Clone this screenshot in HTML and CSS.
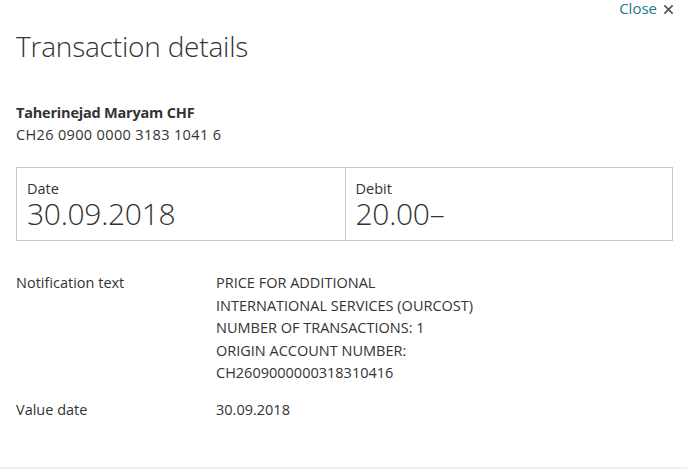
FILE: index.html
```html
<!DOCTYPE html>
<html lang="en">
<head>
<meta charset="utf-8">
<title>Transaction details</title>
<link rel="stylesheet" href="styles.css">
</head>
<body>
<div class="dialog">
  <div class="topbar">
    <a class="close" href="#">Close <svg class="close-icon" viewBox="0 0 12 12" width="11" height="11"><path d="M1.5 1.5 L10.5 10.5 M10.5 1.5 L1.5 10.5" stroke="#555" stroke-width="1.8" fill="none"/></svg></a>
  </div>
  <h1 class="title">Transaction details</h1>
  <div class="account">
    <div class="account-name">Taherinejad Maryam CHF</div>
    <div class="account-iban">CH26 0900 0000 3183 1041 6</div>
  </div>
  <div class="summary">
    <div class="cell">
      <div class="cell-label">Date</div>
      <div class="cell-value">30.09.2018</div>
    </div>
    <div class="cell">
      <div class="cell-label">Debit</div>
      <div class="cell-value">20.00–</div>
    </div>
  </div>
  <dl class="details">
    <dt>Notification text</dt>
    <dd>PRICE FOR ADDITIONAL<br>INTERNATIONAL SERVICES (OURCOST)<br>NUMBER OF TRANSACTIONS: 1<br>ORIGIN ACCOUNT NUMBER:<br>CH2609000000318310416</dd>
    <dt>Value date</dt>
    <dd>30.09.2018</dd>
  </dl>
  <div class="footer-line"></div>
</div>
</body>
</html>
```
FILE: styles.css
```css
html, body {
  margin: 0;
  padding: 0;
  background: #fff;
}
body {
  font-family: "Open Sans", "Noto Sans", sans-serif;
  color: #333;
  font-size: 14.5px;
}
.dialog {
  display: flex;
  flex-direction: column;
  width: 687px;
}
.topbar {
  display: flex;
  justify-content: flex-end;
  padding: 0 13px 0 0;
  height: 18px;
}
.close {
  color: #1f7888;
  text-decoration: none;
  font-size: 15px;
  line-height: 18px;
  margin-top: -2px;
  display: flex;
  align-items: center;
  gap: 6px;
}
.close-icon {
  margin-top: 3px;
}
.title {
  margin: 10px 0 0 16px;
  font-weight: 300;
  font-size: 28px;
  line-height: 36px;
  color: #333;
  letter-spacing: -0.2px;
}
.account {
  margin: 38px 0 0 16px;
  line-height: 22px;
}
.account-name {
  font-weight: 700;
  letter-spacing: -0.2px;
}
.account-iban {
  letter-spacing: 0.35px;
}
.summary {
  margin: 21px 14px 0 16px;
  border: 1px solid #c8c8c8;
  display: grid;
  grid-template-columns: 1fr 1fr;
  height: 72px;
}
.cell {
  padding: 12px 10px 0 10px;
}
.cell + .cell {
  border-left: 1px solid #c8c8c8;
}
.cell-label {
  line-height: 18px;
}
.cell-value {
  font-weight: 300;
  font-size: 30px;
  line-height: 32px;
  letter-spacing: -0.3px;
}
.details {
  margin: 31px 0 0 16px;
  display: grid;
  grid-template-columns: 200px 1fr;
  row-gap: 14.5px;
  line-height: 22.5px;
}
.details dt, .details dd {
  margin: 0;
}
.footer-line {
  margin-top: 45px;
  height: 2px;
  background: #f0f0f0;
}
```
